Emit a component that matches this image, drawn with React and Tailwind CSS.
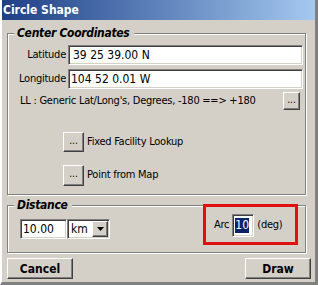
import React from "react";

const font = { fontFamily: '"DejaVu Sans", Verdana, sans-serif' };

function Sunken({ className = "", children }) {
  return (
    <div
      className={`bg-white border border-t-[#808080] border-l-[#808080] border-b-white border-r-white shadow-[inset_1px_1px_0_#404040,inset_-1px_-1px_0_#d4d0c8] ${className}`}
    >
      {children}
    </div>
  );
}

function RaisedBtn({ className = "", children }) {
  return (
    <div
      className={`bg-[#d4d0c8] border border-t-white border-l-white border-b-[#404040] border-r-[#404040] shadow-[inset_-1px_-1px_0_#808080] flex items-center justify-center ${className}`}
    >
      {children}
    </div>
  );
}

function Group({ title, className = "", children }) {
  return (
    <div className={`relative border border-[#808080] shadow-[inset_1px_1px_0_#fff,1px_1px_0_#fff] ${className}`}>
      <span className="absolute left-[6px] top-[-9px] bg-[#d4d0c8] pl-[3px] pr-[4px] text-[12px] tracking-[-0.3px] leading-[16px] font-bold italic text-black">
        {title}
      </span>
      {children}
    </div>
  );
}

const lbl = "text-[11px] tracking-[-0.25px]";

export default function App() {
  return (
    <div
      className="relative w-[318px] h-[285px] bg-[#d4d0c8] text-black [font-stretch:condensed] flex flex-col border-l-[2px] border-l-white border-r-[3px] border-r-[#808080] border-b-[3px] border-b-[#808080] overflow-hidden"
      style={font}
    >
      <div className="h-[20px] shrink-0 bg-gradient-to-r from-[#1f3f85] to-[#a6caf0] flex items-center pl-[3px] -ml-[2px] -mr-[3px]">
        <span className="text-white font-bold text-[12px] leading-none">Circle Shape</span>
      </div>
      <div className="flex flex-col pl-[5px] pt-[13px]">
        <Group title="Center Coordinates" className="h-[162px] mr-[9px]">
          <div className="flex flex-col pt-[11px] pl-[8px] pr-[2px]">
            <div className="flex items-center h-[20px]">
              <span className={`w-[52px] text-right pr-[2px] ${lbl}`}>Latitude</span>
              <Sunken className="flex-1 h-[20px] flex items-center pl-[4px] text-[12px]">39 25 39.00 N</Sunken>
            </div>
            <div className="flex items-center h-[20px] mt-[4px]">
              <span className={`w-[52px] text-right pr-[2px] whitespace-nowrap ${lbl}`}>Longitude</span>
              <Sunken className="flex-1 h-[20px] flex items-center pl-[2px] text-[12px]">104 52 0.01 W</Sunken>
            </div>
            <div className="flex items-center mt-[3px] h-[18px]">
              <span className={`flex-1 pl-[4px] whitespace-nowrap ${lbl}`}>LL : Generic Lat/Long's, Degrees, -180 ==&gt; +180</span>
              <RaisedBtn className="w-[17px] h-[18px] text-[10px] leading-none pb-[3px] mr-[3px]">...</RaisedBtn>
            </div>
            <div className="flex items-center mt-[22px] pl-[47px]">
              <RaisedBtn className="w-[21px] h-[20px] text-[10px] leading-none pb-[3px]">...</RaisedBtn>
              <span className={`ml-[3px] ${lbl}`}>Fixed Facility Lookup</span>
            </div>
            <div className="flex items-center mt-[13px] pl-[47px]">
              <RaisedBtn className="w-[21px] h-[21px] text-[10px] leading-none pb-[3px]">...</RaisedBtn>
              <span className={`ml-[3px] ${lbl}`}>Point from Map</span>
            </div>
          </div>
        </Group>
        <Group title="Distance" className="h-[48px] mt-[10px] mr-[9px]">
          <div className="flex items-center pl-[12px] pt-[13px] pr-[4px]">
            <Sunken className="w-[47px] h-[20px] flex items-center pl-[2px] text-[12px]">10.00</Sunken>
            <Sunken className="w-[43px] h-[20px] flex items-center pl-[3px] text-[12px] justify-between pr-[1px]">
              <span>km</span>
              <RaisedBtn className="w-[16px] h-[16px]">
                <svg width="7" height="4" viewBox="0 0 7 4"><path d="M0 0h7L3.5 4z" fill="#000" /></svg>
              </RaisedBtn>
            </Sunken>
            <div className="flex-1" />
          </div>
        </Group>
        <div className="flex justify-between mt-[5px] mr-[4px]">
          <RaisedBtn className="w-[66px] h-[21px] font-bold text-[12px]">Cancel</RaisedBtn>
          <RaisedBtn className="w-[66px] h-[21px] font-bold text-[12px]">Draw</RaisedBtn>
        </div>
      </div>
      <div className="absolute left-[201px] top-[204px] w-[95px] h-[41px] border-[3px] border-[#e01010] flex items-center pl-[8px] pt-[2px]">
        <span className={lbl}>Arc</span>
        <Sunken className="w-[22px] h-[23px] ml-[3px] flex items-center pl-[2px] text-[12px]">
          <span className="bg-[#0a246a] text-white leading-[15px]">10</span>
        </Sunken>
        <span className={`ml-[3px] ${lbl}`}>(deg)</span>
      </div>
    </div>
  );
}
